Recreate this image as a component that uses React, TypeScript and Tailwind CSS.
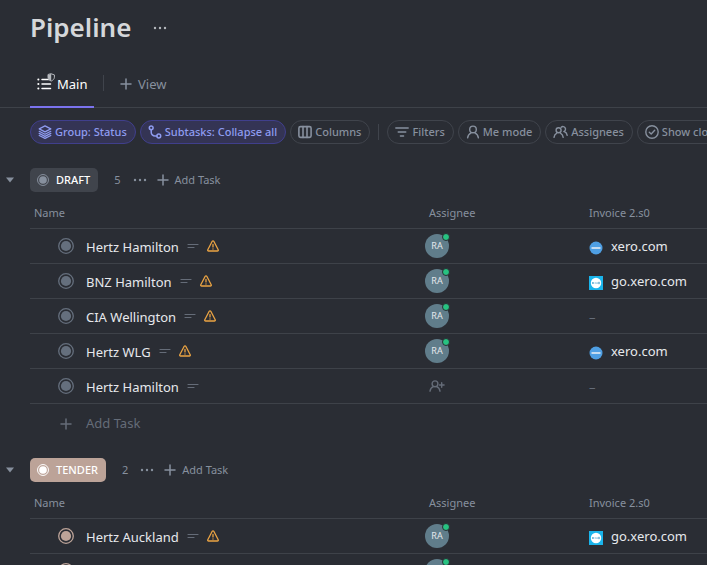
import type { ReactNode } from "react";

type Site = "xero" | "go" | null;
type Task = { name: string; warn: boolean; assigned: boolean; site: Site };

const draft: Task[] = [
  { name: "Hertz Hamilton", warn: true, assigned: true, site: "xero" },
  { name: "BNZ Hamilton", warn: true, assigned: true, site: "go" },
  { name: "CIA Wellington", warn: true, assigned: true, site: null },
  { name: "Hertz WLG", warn: true, assigned: true, site: "xero" },
  { name: "Hertz Hamilton", warn: false, assigned: false, site: null },
];

const tender: Task[] = [
  { name: "Hertz Auckland", warn: true, assigned: true, site: "go" },
  { name: "", warn: false, assigned: true, site: null },
];

const stroke = {
  fill: "none",
  stroke: "currentColor",
  strokeLinecap: "round" as const,
  strokeLinejoin: "round" as const,
};

function Plus({ className = "" }: { className?: string }) {
  return (
    <svg viewBox="0 0 12 12" className={`size-3 shrink-0 ${className}`} {...stroke} strokeWidth="1.5">
      <path d="M6 1v10M1 6h10" />
    </svg>
  );
}

function Dots({ className = "" }: { className?: string }) {
  return (
    <svg viewBox="0 0 14 4" className={`h-1 w-3.5 ${className}`} fill="currentColor">
      <circle cx="2" cy="2" r="1.2" />
      <circle cx="7" cy="2" r="1.2" />
      <circle cx="12" cy="2" r="1.2" />
    </svg>
  );
}

function StatusDot({ className }: { className: string }) {
  return (
    <svg viewBox="0 0 16 16" className={`shrink-0 ${className}`}>
      <circle cx="8" cy="8" r="7.3" fill="none" stroke="currentColor" strokeWidth="1.3" />
      <circle cx="8" cy="8" r="5.1" fill="currentColor" />
    </svg>
  );
}

function Layers() {
  return (
    <svg viewBox="0 0 14 14" className="size-3.5 shrink-0" {...stroke} strokeWidth="1.2">
      <path d="M7 .9 12.8 3.9 7 6.9 1.2 3.9Z" />
      <path d="M1.2 6.300 7 9.300l5.800-3M1.200 8.400 7 11.400l5.800-3M1.200 10.500 7 13.400l5.800-2.900" />
    </svg>
  );
}

function Subtask() {
  return (
    <svg viewBox="0 0 14 14" className="size-3.5 shrink-0" {...stroke} strokeWidth="1.5">
      <circle cx="3.2" cy="2.8" r="1.9" />
      <circle cx="10.8" cy="11" r="1.9" />
      <path d="M3.2 4.8v2.4A3.8 3.8 0 0 0 7 11h1.8" />
    </svg>
  );
}

function ColumnsIcon() {
  return (
    <svg viewBox="0 0 14 14" className="size-3.5 shrink-0" {...stroke} strokeWidth="1.6">
      <rect x=".9" y="1.6" width="12.2" height="10.8" rx="1.6" />
      <path d="M5 1.6v10.8M9 1.6v10.8" />
    </svg>
  );
}

function FilterIcon() {
  return (
    <svg viewBox="0 0 14 14" className="size-3.5 shrink-0" {...stroke} strokeWidth="1.4">
      <path d="M.8 3h12.4M3.2 7h7.6M5.4 11h3.2" />
    </svg>
  );
}

function Person() {
  return (
    <svg viewBox="0 0 14 14" className="size-3.5 shrink-0" {...stroke} strokeWidth="1.4">
      <circle cx="7" cy="4.4" r="3.3" />
      <path d="M1.6 12.8c.3-2.3 1.6-4 3.5-4.9M12.4 12.8c-.3-2.3-1.6-4-3.5-4.9" />
    </svg>
  );
}

function People() {
  return (
    <svg viewBox="0 0 15 14" className="h-3.5 w-[15px] shrink-0" {...stroke} strokeWidth="1.4">
      <circle cx="5.6" cy="5.2" r="2.5" />
      <path d="M1 12.4c.2-2 1.2-3.5 2.8-4.3M10.2 12.4c-.2-2-1.2-3.5-2.8-4.3" />
      <path d="M8.2 2.2a2.6 2.6 0 1 1 2.6 4.4M11.3 6.7c1.7.6 2.7 1.9 2.9 3.7" />
    </svg>
  );
}

function CheckCircle() {
  return (
    <svg viewBox="0 0 14 14" className="size-3.5 shrink-0" {...stroke} strokeWidth="1.4">
      <circle cx="7" cy="7" r="6.2" />
      <path d="M4.3 7.2l1.9 1.8 3.5-3.7" />
    </svg>
  );
}

function ListShield() {
  return (
    <svg viewBox="0 0 18 18" className="mb-1 size-[18px] shrink-0" {...stroke}>
      <path d="M5 6.5h8M5 11h8.5M5 15.5h8.5" strokeWidth="1.5" />
      <path d="M1.3 6.5h.1M1.3 11h.1M1.3 15.5h.1" strokeWidth="2" />
      <path d="M14.2.8 17.4 1.9v2.3c0 1.6-1.2 2.9-3.2 3.9-2-1-3.2-2.3-3.2-3.9V1.9Z" fill="#2a2d34" strokeWidth="1" className="text-[#b5b8bd]" />
      <path d="M14.2.8v7.3c-2-1-3.2-2.3-3.2-3.9V1.9Z" fill="#b5b8bd" stroke="none" />
    </svg>
  );
}

function Lines() {
  return (
    <svg viewBox="0 0 12 6" className="h-1.5 w-3 shrink-0 text-[#656c78]" {...stroke} strokeWidth="1.2">
      <path d="M1 1.5h10M1 4.5h6" />
    </svg>
  );
}

function Warning() {
  return (
    <svg viewBox="0 0 12 12" className="size-3 shrink-0 text-[#eba443]" {...stroke} strokeWidth="1.3">
      <path d="M5.2 1.3.8 9.7c-.3.7.1 1.3.8 1.3h8.8c.7 0 1.1-.6.8-1.3L6.8 1.3c-.4-.6-1.2-.6-1.6 0Z" />
      <path d="M6 4.5v2.4M6 8.9v.1" />
    </svg>
  );
}

function AddPerson() {
  return (
    <svg viewBox="0 0 16 12" className="h-3 w-4 text-[#656c78]" {...stroke} strokeWidth="1.4">
      <circle cx="6" cy="3.8" r="2.9" />
      <path d="M1 11.2c.3-2.3 1.5-3.7 3.3-4.5M11 11.2c-.3-2.3-1.5-3.7-3.3-4.5M12.7 2.8v4.4M10.5 5h4.6" />
    </svg>
  );
}

function SiteIcon({ site }: { site: "xero" | "go" }) {
  return site === "xero" ? (
    <svg viewBox="0 0 14 14" className="size-3.5 shrink-0">
      <circle cx="7" cy="7" r="6.5" fill="#4f9fe3" />
      <rect x="2.5" y="6" width="9" height="2" fill="#c5dcf0" />
    </svg>
  ) : (
    <svg viewBox="0 0 14 14" className="size-3.5 shrink-0">
      <rect width="14" height="14" fill="#1ab4eb" />
      <circle cx="7" cy="7" r="5.2" fill="#fff" />
      <path d="M3.2 6l1.500 2M4.700 6 3.200 8M5.600 7h1.500M8 8V6.300M9.300 6.300h1.300v1.400H9.300z" stroke="#5aa9cf" strokeWidth=".8" fill="none" />
    </svg>
  );
}

function Pill({ icon, active = false, children }: { icon: ReactNode; active?: boolean; children: ReactNode }) {
  const tone = active
    ? "border-[#403f8c] bg-[#343454] text-[#8f9cf0]"
    : "border-[#40444c] text-[#87909e]";
  return (
    <button
      type="button"
      className={`flex h-6 shrink-0 items-center gap-[3px] rounded-full border pr-2 pl-[7px] text-[11px] font-medium whitespace-nowrap ${tone}`}
    >
      {icon}
      <span className="pt-px">{children}</span>
    </button>
  );
}

function TaskRow({ task, dot }: { task: Task; dot: string }) {
  return (
    <tr className="h-[35px]">
      <td className="border-b border-[#3e4249] p-0">
        <div className="flex items-center pl-7">
          <StatusDot className={`size-4 ${dot}`} />
          <span className="mr-2 ml-3 pt-0.5 text-[13px] leading-4">{task.name}</span>
          {task.name && <Lines />}
          {task.warn && <span className="ml-2"><Warning /></span>}
        </div>
      </td>
      <td className="border-b border-[#3e4249] p-0">
        {task.assigned ? (
          <div className="relative flex size-6 items-center justify-center rounded-full bg-[#607d8b] text-[9px]">
            RA
            <span className="absolute -top-px -right-px size-2 rounded-full border border-[#2a2d34] bg-[#27c281]" />
          </div>
        ) : (
          <button type="button" aria-label="Assign" className="flex pl-1"><AddPerson /></button>
        )}
      </td>
      <td className="border-b border-[#3e4249] p-0 pl-1">
        {task.site ? (
          <a href="#" className="flex items-center gap-2 text-[13px] leading-4">
            <span className="pt-1"><SiteIcon site={task.site} /></span>
            {task.site === "xero" ? "xero.com" : "go.xero.com"}
          </a>
        ) : (
          <span className="text-[13px] text-[#656c78]">–</span>
        )}
      </td>
    </tr>
  );
}

type GroupProps = { label: string; count: number; tasks: Task[]; badge: string; badgeDot: string; dot: string; addRow?: boolean };

function Group({ label, count, tasks, badge, badgeDot, dot, addRow = false }: GroupProps) {
  return (
    <section>
      <div className="flex h-6 items-center text-[#87909e]">
        <button type="button" aria-label={`Collapse ${label}`} className="flex w-[30px] pl-1.5">
          <svg viewBox="0 0 8 6" className="h-1.5 w-2" fill="currentColor"><path d="M0 .5h8L4 5.5Z" /></svg>
        </button>
        <h2 className={`flex h-6 items-center gap-[7px] rounded-[5px] pr-2 pl-[7px] text-[11px] font-medium text-white ${badge}`}>
          <StatusDot className={`size-3 ${badgeDot}`} />
          <span className="pt-px">{label}</span>
        </h2>
        <span className="ml-4 pt-px text-[11px]">{count}</span>
        <button type="button" aria-label="More options" className="ml-3 flex"><Dots /></button>
        <button type="button" className="ml-2.5 flex items-center gap-1.5 text-[11px]">
          <Plus />
          <span className="pt-px">Add Task</span>
        </button>
      </div>
      <div className="pl-[30px]">
        <table className="w-full table-fixed border-separate border-spacing-0 text-left">
          <colgroup>
            <col />
            <col className="w-40" />
            <col className="w-[122px]" />
          </colgroup>
          <thead>
            <tr className="h-[37px] text-[11px] text-[#87909e]">
              <th className="border-b border-[#3e4249] p-0 pt-1.5 pl-1 font-normal">Name</th>
              <th className="border-b border-[#3e4249] p-0 pt-1.5 pl-1 font-normal">Assignee</th>
              <th className="border-b border-[#3e4249] p-0 pt-1.5 pl-1 font-normal">Invoice 2.s0</th>
            </tr>
          </thead>
          <tbody>
            {tasks.map((task, i) => <TaskRow key={i} task={task} dot={dot} />)}
          </tbody>
        </table>
        {addRow && (
          <button type="button" className="flex h-10 items-center gap-3.5 pl-[30px] text-[13px] text-[#656c78]">
            <Plus />Add Task
          </button>
        )}
      </div>
    </section>
  );
}

export default function App() {
  return (
    <main className="h-screen overflow-hidden bg-[#2a2d34] font-['Noto_Sans','Open_Sans',sans-serif] text-[#e6e8ec]">
      <header className="flex h-[54px] items-center gap-[22px] pl-[30px]">
        <h1 className="text-[26px] leading-8 font-semibold text-[#d5d7da]">Pipeline</h1>
        <button type="button" aria-label="More" className="flex pt-0.5"><Dots className="text-[#b5b8bd]" /></button>
      </header>
      <nav className="flex h-[54px] items-end border-b border-[#3e4249] pl-[30px]">
        <button type="button" className="-mb-px flex h-[47px] w-16 items-center gap-0.5 border-b-2 border-[#7b73ee] pl-[7px] text-[13px] text-white">
          <ListShield />
          <span className="pt-0.5">Main</span>
        </button>
        <div className="mr-4 mb-4 ml-[9px] h-4 w-px bg-[#40444c]" />
        <button type="button" className="flex h-[46px] items-center gap-1.5 text-[13px] text-[#87909e]">
          <Plus />
          <span className="pt-0.5">View</span>
        </button>
      </nav>
      <div className="mt-3 mb-6 flex items-center gap-1 overflow-hidden pl-[30px]">
        <Pill icon={<Layers />} active>Group: Status</Pill>
        <Pill icon={<Subtask />} active>Subtasks: Collapse all</Pill>
        <Pill icon={<ColumnsIcon />}>Columns</Pill>
        <div className="mx-1 h-4 w-px shrink-0 bg-[#40444c]" />
        <Pill icon={<FilterIcon />}>Filters</Pill>
        <Pill icon={<Person />}>Me mode</Pill>
        <Pill icon={<People />}>Assignees</Pill>
        <Pill icon={<CheckCircle />}>Show closed</Pill>
      </div>
      <div className="flex flex-col gap-3.5">
        <Group label="DRAFT" count={5} tasks={draft} badge="bg-[#40444c]" badgeDot="text-[#87909e]" dot="text-[#656f7d]" addRow />
        <Group label="TENDER" count={2} tasks={tender} badge="bg-[#bca398]" badgeDot="text-white" dot="text-[#bca398]" />
      </div>
    </main>
  );
}
